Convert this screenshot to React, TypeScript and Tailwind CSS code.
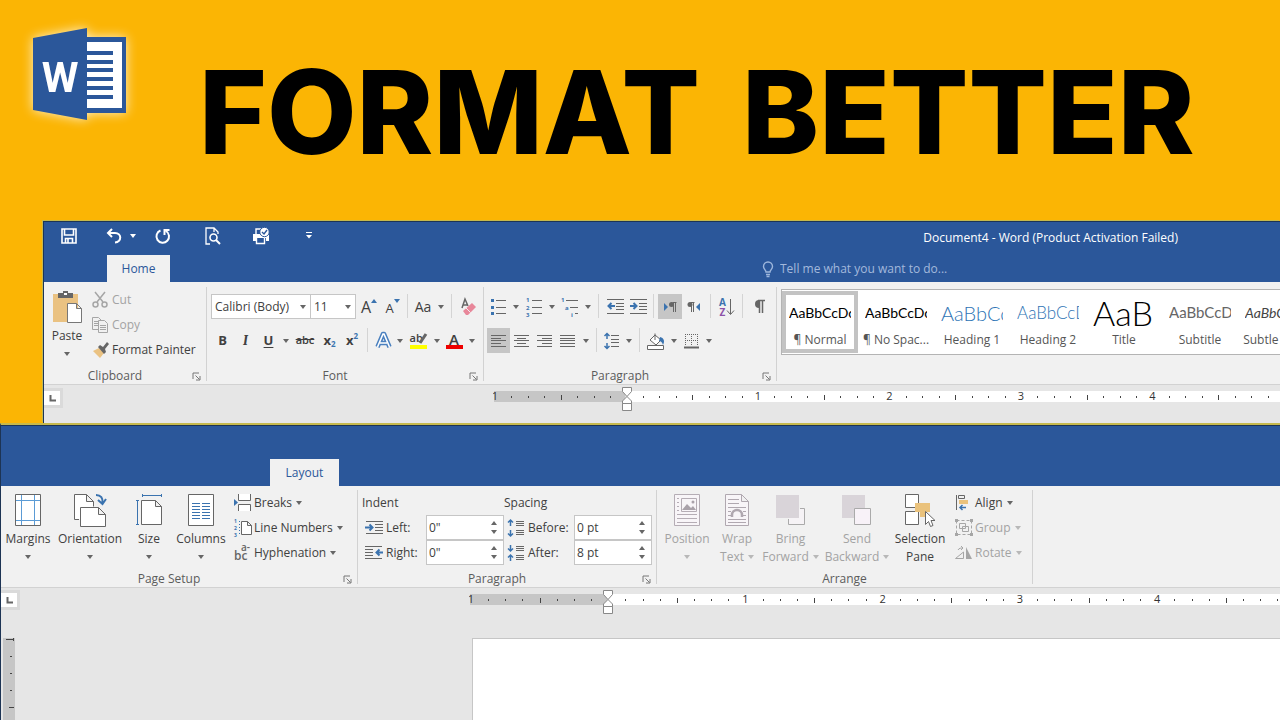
import type { ReactNode } from 'react'

const GREY = '#666666'
const BLUE = '#3b73af'

function Icon({ w = 18, h = 18, children }: { w?: number; h?: number; children: ReactNode }) {
  return (
    <svg width={w} height={h} viewBox={`0 0 ${w} ${h}`} fill="none" stroke={GREY} aria-hidden="true" className="shrink-0 overflow-visible">
      {children}
    </svg>
  )
}

function Caret({ color = GREY, up = false }: { color?: string; up?: boolean }) {
  return (
    <svg width="6" height="4" viewBox="0 0 6 4" aria-hidden="true" className="shrink-0">
      <path d={up ? 'M0 4h6L3 0z' : 'M0 0h6L3 4z'} fill={color} />
    </svg>
  )
}

function Tool({ label, className, children }: { label: string; className: string; children: ReactNode }) {
  return (
    <button aria-label={label} className={`flex h-[25px] shrink-0 items-center justify-center ${className}`}>
      {children}
    </button>
  )
}

function Sep() {
  return <div className="mx-1 h-6 w-px shrink-0 bg-[#d4d4d4]" />
}

function Group({ title, launcher = true, className = '', children }: { title: string; launcher?: boolean; className?: string; children: ReactNode }) {
  return (
    <section className={`flex shrink-0 flex-col border-r border-[#d2d2d2] ${className}`}>
      <div className="flex min-h-[84px] flex-1">{children}</div>
      <footer className="flex h-[10px] items-center text-[#5c5c5c]">
        <span className="flex-1 text-center">{title}</span>
        {launcher && (
          <button aria-label={`${title} settings`} className="flex w-5 justify-center">
            <Icon w={9} h={9}>
              <path d="M1 7V1h6M3.500 3.500l4 4M8 4v4H4" stroke="#777" />
            </Icon>
          </button>
        )}
      </footer>
    </section>
  )
}

function BigButton({ icon, label, second, muted = false, caret = true, className }: { icon: ReactNode; label: string; second?: string; muted?: boolean; caret?: boolean; className: string }) {
  return (
    <button className={`flex shrink-0 flex-col items-center whitespace-nowrap ${muted ? 'text-[#a3a3a3]' : ''} ${className}`}>
      <span className="flex h-10 items-center">{icon}</span>
      <span className="leading-[18px]">{label}</span>
      <span className="flex h-[17px] items-center gap-1">
        {second}
        {caret && <Caret color={muted ? '#b8b8b8' : GREY} />}
      </span>
    </button>
  )
}

function SmallButton({ icon, label, muted = false, caret = false }: { icon: ReactNode; label: string; muted?: boolean; caret?: boolean }) {
  return (
    <button className={`flex h-[25px] items-center whitespace-nowrap ${muted ? 'text-[#a3a3a3]' : ''}`}>
      <span className="flex w-5 justify-start">{icon}</span>
      <span>{label}</span>
      {caret && (
        <span className="ml-1">
          <Caret color={muted ? '#b8b8b8' : GREY} />
        </span>
      )}
    </button>
  )
}

function Spinner({ id, label, icon, value, labelClass }: { id: string; label: string; icon: ReactNode; value: string; labelClass: string }) {
  return (
    <div className="flex h-[25px] items-center">
      <span className="flex w-6 justify-center">{icon}</span>
      <label htmlFor={id} className={labelClass}>{label}</label>
      <div className="flex h-[25px] w-[78px] border border-[#c6c6c6] bg-white">
        <input id={id} defaultValue={value} className="w-full min-w-0 bg-transparent px-[2px] outline-none" />
        <div className="flex w-[18px] shrink-0 flex-col items-center justify-around py-[3px]">
          <button aria-label={`Increase ${label}`} className="flex"><Caret up /></button>
          <button aria-label={`Decrease ${label}`} className="flex"><Caret /></button>
        </div>
      </div>
    </div>
  )
}

function Ruler({ inch, className }: { inch: number; className: string }) {
  const ticks = Array.from({ length: 64 }, (_, i) => i)
  return (
    <svg height="26" width="100%" aria-hidden="true" className={`min-w-0 flex-1 ${className}`}>
      <rect x="1" y="6" width="100%" height="11" fill="#fff" />
      <rect x="1" y="6" width={inch} height="11" fill="#c6c6c6" />
      {ticks.map((i) => {
        const x = 2 + (i * inch) / 8
        if (i === 8) return null
        if (i % 8 === 0) {
          return (
            <text key={i} x={x} y="15" textAnchor="middle" fontSize="11" fill="#333">
              {Math.abs(i / 8 - 1)}
            </text>
          )
        }
        return i % 4 === 0 ? (
          <rect key={i} x={Math.round(x)} y="10" width="1" height="5" fill="#444" />
        ) : (
          <rect key={i} x={Math.round(x)} y="11" width="1" height="2" fill="#444" />
        )
      })}
      <g transform={`translate(${Math.round(inch) - 3} 2)`} fill="#fff" stroke="#888">
        <path d="M.5.5h9v4L5 9.500.5 4.500zM5 9.500l4.500 4.500v2.500h-9V14zM.5 16.500h9v7h-9z" />
      </g>
    </svg>
  )
}

function TabSelector() {
  return (
    <button aria-label="Tab selector" className="flex h-5 w-[19px] shrink-0 items-center justify-center border-r-[3px] border-b-[3px] border-t-[3px] border-[#dadada] bg-white">
      <Icon w={7} h={7}>
        <path d="M1.500 0v5.500H7" strokeWidth="2" />
      </Icon>
    </button>
  )
}

function Lines({ rows, color = GREY }: { rows: [number, number, number][]; color?: string }) {
  return (
    <>
      {rows.map(([x1, x2, y]) => (
        <path key={y} d={`M${x1} ${y + 0.5}H${x2}`} stroke={color} />
      ))}
    </>
  )
}

function WordLogo() {
  return (
    <svg width="112" height="112" viewBox="24 18 112 112" aria-label="Word" className="shrink-0 overflow-visible drop-shadow-[0_0_6px_rgba(255,255,255,0.8)]">
      <path d="M87 37h39v76H87z" fill="#2b579a" />
      <path d="M87 42h35v66H87z" fill="#fff" />
      {[51, 60, 68, 77, 86, 95].map((y) => (
        <rect key={y} x="87" y={y} width="26" height="4" fill="#2b579a" />
      ))}
      <path d="M33 38l54-10v92l-54-10z" fill="#2b579a" />
      <text x="60" y="92" textAnchor="middle" fontFamily="Roboto, sans-serif" fontSize="42" fontWeight="700" fill="#fff">W</text>
    </svg>
  )
}

function QuickAccess() {
  return (
    <div className="flex h-[33px] items-start pt-px text-white">
      <Tool label="Save" className="ml-[13px] w-6">
        <Icon w={16} h={16}>
          <path d="M1 1h14v14H1zM3.500 1v6h9V1M4.500 15v-4.500h7V15M7 11v4" stroke="#fff" strokeWidth="1.600" />
        </Icon>
      </Tool>
      <Tool label="Undo" className="ml-[21px] w-6">
        <Icon w={16} h={16}>
          <path d="M6 1L2 5l4 4M2 5h7c7 0 7 9 0 9.500" stroke="#fff" strokeWidth="2" />
        </Icon>
      </Tool>
      <Tool label="Undo history" className="w-[14px]"><Caret color="#fff" /></Tool>
      <Tool label="Repeat" className="ml-[11px] w-6">
        <Icon w={16} h={16}>
          <path d="M5.500 2.500A6.300 6.300 0 1 0 11 3M9.500 7V2h5" stroke="#fff" strokeWidth="2" />
        </Icon>
      </Tool>
      <Tool label="Print preview" className="ml-[26px] w-6">
        <Icon w={16} h={18}>
          <path d="M5 17H1V1h8l4 4v2M9 1v4" stroke="#fff" strokeWidth="1.300" />
          <circle cx="8.500" cy="10.500" r="3.500" stroke="#fff" strokeWidth="1.600" />
          <path d="M11 13l4 4" stroke="#fff" strokeWidth="2" />
        </Icon>
      </Tool>
      <Tool label="Quick print" className="ml-6 w-6">
        <Icon w={18} h={18}>
          <path d="M1 7h16v7h-3v-3H4v3H1z" fill="#fff" stroke="none" />
          <path d="M4 7V2h5M4.500 11v5.500h8V11" stroke="#fff" strokeWidth="1.400" />
          <circle cx="12.500" cy="5" r="4.700" fill="#fff" stroke="#2b579a" />
          <path d="M10 5l2 2 3-4" stroke="#2b579a" strokeWidth="1.400" />
        </Icon>
      </Tool>
      <Tool label="Customize toolbar" className="ml-6 w-6">
        <Icon w={6} h={7}>
          <path d="M0 .5h6" stroke="#fff" />
          <path d="M0 3h6L3 6.500z" fill="#fff" stroke="none" />
        </Icon>
      </Tool>
      <p className="mr-[102px] ml-auto pt-[6px] leading-[18px]">Document4 - Word (Product Activation Failed)</p>
    </div>
  )
}

function Clipboard() {
  return (
    <Group title="Clipboard" className="w-[163px]">
      <BigButton
        label="Paste"
        className="w-[46px]"
        icon={
          <Icon w={31} h={34}>
            <path d="M1 4h25v28H1z" fill="#eac282" stroke="none" />
            <path d="M6 3h5V1h5v2h5v5H6z" fill="#666" stroke="none" />
            <path d="M12 3h3v2h-3z" fill="#fff" stroke="none" />
            <path d="M15.500 13.500h9l5 5v14h-14zM24.500 13.500v5h5" fill="#fff" stroke="#777" />
          </Icon>
        }
      />
      <div className="flex flex-col pl-[2px]">
        <SmallButton
          muted
          label="Cut"
          icon={
            <Icon w={16} h={16}>
              <g stroke="#a6a6a6" strokeWidth="1.500">
                <path d="M3 0l8 10M13 0L5 10" />
                <circle cx="3.500" cy="12.500" r="2.500" />
                <circle cx="12.500" cy="12.500" r="2.500" />
              </g>
            </Icon>
          }
        />
        <SmallButton
          muted
          label="Copy"
          icon={
            <Icon w={17} h={16}>
              <g stroke="#a6a6a6" fill="#f1f1f1">
                <path d="M.5.5h6l3 3v9h-9zM2 4.500h4M2 6.500h4M2 8.500h4" />
                <path d="M6.500 3.500h6l3 3v9h-9zM8 8.500h6M8 10.500h6M8 12.500h6" />
              </g>
            </Icon>
          }
        />
        <SmallButton
          label="Format Painter"
          icon={
            <Icon w={17} h={16}>
              <path d="M1 9l6-3 5 5-4 5z" fill="#eac282" stroke="none" />
              <path d="M6 5l2-2 3 2 4-5 2 2-4 5 1 3-2 2z" fill="#666" stroke="none" />
            </Icon>
          }
        />
      </div>
    </Group>
  )
}

function FontGroup() {
  return (
    <Group title="Font" className="w-[277px]">
      <div className="flex flex-col gap-[9px] pt-[7px] pl-1">
        <div className="flex">
          <label className="relative flex h-[25px] w-[100px] items-center border border-[#c6c6c6] bg-white">
            <select aria-label="Font" className="h-full w-full appearance-none pl-[3px] outline-none">
              <option>Calibri (Body)</option>
            </select>
            <span className="pointer-events-none absolute right-1"><Caret /></span>
          </label>
          <label className="relative -ml-px flex h-[25px] w-[46px] items-center border border-[#c6c6c6] bg-white">
            <select aria-label="Font size" className="h-full w-full appearance-none pl-[3px] outline-none">
              <option>11</option>
            </select>
            <span className="pointer-events-none absolute right-1"><Caret /></span>
          </label>
          <Tool label="Grow font" className="w-[26px]">
            <span className="text-base">A</span>
            <span className="-mt-3"><Caret color={BLUE} up /></span>
          </Tool>
          <Tool label="Shrink font" className="w-[21px]">
            <span className="pt-1 text-[13px]">A</span>
            <span className="-mt-3"><Caret color={BLUE} /></span>
          </Tool>
          <Sep />
          <Tool label="Change case" className="w-[22px] text-sm">Aa</Tool>
          <Tool label="Case options" className="w-[13px]"><Caret /></Tool>
          <Sep />
          <Tool label="Clear formatting" className="w-6">
            <Icon w={17} h={18}>
              <path d="M2 10L5 1l3 7M3.500 7h4" strokeWidth="1.500" />
              <path d="M3 13l9-8 4 4-8 8H6z" fill="#e8879a" stroke="none" />
              <path d="M6 10l4.500 4.500" stroke="#f1f1f1" />
            </Icon>
          </Tool>
        </div>
        <div className="flex">
          <Tool label="Bold" className="w-[23px] text-[13px] font-bold">B</Tool>
          <Tool label="Italic" className="w-[23px] font-serif text-sm font-bold italic">I</Tool>
          <Tool label="Underline" className="w-[23px] text-[13px] font-bold underline underline-offset-2">U</Tool>
          <Tool label="Underline options" className="w-3"><Caret /></Tool>
          <Tool label="Strikethrough" className="w-[26px] text-[11px] font-semibold line-through">abc</Tool>
          <Tool label="Subscript" className="w-[23px] text-[13px] font-bold">
            x<span className="pt-2 text-[8px] text-[#3b73af]">2</span>
          </Tool>
          <Tool label="Superscript" className="w-[22px] text-[13px] font-bold">
            x<span className="pb-2 text-[8px] text-[#3b73af]">2</span>
          </Tool>
          <Sep />
          <Tool label="Text effects" className="w-[22px]">
            <Icon w={17} h={18}>
              <path d="M2.500 15L8 2h1l5.500 13M5 11h7" stroke="#4a80bf" strokeWidth="4.500" strokeLinejoin="round" />
              <path d="M2.500 15L8 2h1l5.500 13M5 11h7" stroke="#fff" strokeWidth="1.600" />
            </Icon>
          </Tool>
          <Tool label="Effect options" className="w-[11px]"><Caret /></Tool>
          <Tool label="Highlight" className="w-[26px]">
            <span className="flex w-[17px] flex-col">
              <span className="flex h-[13px] items-center text-[11px] font-semibold">
                ab
                <Icon w={4} h={12}>
                  <path d="M3 1L-3 10" strokeWidth="3" />
                </Icon>
              </span>
              <span className="h-1 bg-[#ffff00]" />
            </span>
          </Tool>
          <Tool label="Highlight colors" className="w-[11px]"><Caret /></Tool>
          <Tool label="Font color" className="w-6">
            <span className="flex w-[17px] flex-col items-center">
              <span className="h-[13px] text-[15px] leading-[14px] font-semibold">A</span>
              <span className="h-1 w-full bg-[#ee0000]" />
            </span>
          </Tool>
          <Tool label="Font colors" className="w-[11px]"><Caret /></Tool>
        </div>
      </div>
    </Group>
  )
}

const arrowLeft = 'M9 8H3M5.500 5L2.500 8l3 3'
const arrowRight = 'M1 8h6M4.500 5l3 3-3 3'

function ParagraphGroup() {
  return (
    <Group title="Paragraph" className="w-[293px]">
      <div className="flex flex-col gap-[9px] pt-[7px] pl-[3px]">
        <div className="flex">
          <Tool label="Bullets" className="w-[23px]">
            <Icon w={15} h={18}>
              <Lines rows={[[5, 15, 2], [5, 15, 9], [5, 15, 15]]} />
              <path d="M0 1h3v3H0zM0 8h3v3H0zM0 14h3v3H0z" fill={BLUE} stroke="none" />
            </Icon>
          </Tool>
          <Tool label="Bullet library" className="w-3"><Caret /></Tool>
          <Tool label="Numbering" className="w-6">
            <Icon w={16} h={18}>
              <Lines rows={[[6, 16, 2], [6, 16, 9], [6, 16, 15]]} />
              <g fontSize="6" fontWeight="700" fill={BLUE} stroke="none">
                <text x="0" y="4">1</text>
                <text x="0" y="12">2</text>
                <text x="0" y="19">3</text>
              </g>
            </Icon>
          </Tool>
          <Tool label="Number library" className="w-3"><Caret /></Tool>
          <Tool label="Multilevel list" className="w-6">
            <Icon w={18} h={18}>
              <Lines rows={[[5, 17, 2], [9, 17, 9], [14, 17, 15]]} />
              <g fontSize="6" fontWeight="700" fill={BLUE} stroke="none">
                <text x="0" y="4">1</text>
                <text x="4" y="12">a</text>
                <text x="10" y="19">i</text>
              </g>
            </Icon>
          </Tool>
          <Tool label="List library" className="w-3"><Caret /></Tool>
          <Sep />
          <Tool label="Decrease indent" className="w-[23px]">
            <Icon w={18} h={17}>
              <Lines rows={[[1, 18, 1], [10, 18, 5], [10, 18, 8], [10, 18, 11], [1, 18, 15]]} />
              <path d={arrowLeft} stroke={BLUE} strokeWidth="2" />
            </Icon>
          </Tool>
          <Tool label="Increase indent" className="w-[23px]">
            <Icon w={18} h={17}>
              <Lines rows={[[1, 18, 1], [10, 18, 5], [10, 18, 8], [10, 18, 11], [1, 18, 15]]} />
              <path d={arrowRight} stroke={BLUE} strokeWidth="2" />
            </Icon>
          </Tool>
          <Sep />
          <Tool label="Left to right" className="w-6 bg-[#c6c6c6]">
            <Icon w={14} h={12}>
              <path d="M1 2l4 4-4 4z" fill={BLUE} stroke="none" />
              <path d="M13.500 1.500H9.500M10.500 1v10M12.500 1v10" />
              <circle cx="8.500" cy="3.500" r="2.500" fill={GREY} stroke="none" />
            </Icon>
          </Tool>
          <Tool label="Right to left" className="w-6">
            <Icon w={14} h={12}>
              <path d="M13 2L9 6l4 4z" fill={BLUE} stroke="none" />
              <path d="M7.500 1.500h-4M4.500 1v10M6.500 1v10" />
              <circle cx="3" cy="3.500" r="2.500" fill={GREY} stroke="none" />
            </Icon>
          </Tool>
          <Sep />
          <Tool label="Sort" className="w-[23px]">
            <span className="flex flex-col text-[10px] leading-[10px] font-bold">
              <span className="text-[#3b73af]">A</span>
              <span className="text-[#8d52a8]">Z</span>
            </span>
            <Icon w={8} h={18}>
              <path d="M4.500 1v15M1 12.500l3.500 4 3.500-4" />
            </Icon>
          </Tool>
          <Sep />
          <Tool label="Show marks" className="w-6">
            <Icon w={12} h={15}>
              <path d="M12 1.500H5M6.500 1v13M9.500 1v13" strokeWidth="1.500" />
              <path d="M6 1a4 4 0 0 0 0 8z" fill={GREY} stroke="none" />
            </Icon>
          </Tool>
        </div>
        <div className="flex">
          <Tool label="Align left" className="w-[23px] bg-[#c6c6c6]">
            <Icon w={16} h={12}><Lines rows={[[0, 15, 0], [0, 10, 3], [0, 15, 5], [0, 10, 8], [0, 15, 11]]} /></Icon>
          </Tool>
          <Tool label="Center" className="w-[23px]">
            <Icon w={16} h={12}><Lines rows={[[0, 15, 0], [3, 12, 3], [0, 15, 5], [3, 12, 8], [0, 15, 11]]} /></Icon>
          </Tool>
          <Tool label="Align right" className="w-6">
            <Icon w={16} h={12}><Lines rows={[[0, 15, 0], [5, 15, 3], [0, 15, 5], [5, 15, 8], [0, 15, 11]]} /></Icon>
          </Tool>
          <Tool label="Justify" className="w-[22px]">
            <Icon w={16} h={12}><Lines rows={[[0, 15, 0], [0, 15, 3], [0, 15, 5], [0, 15, 8], [0, 15, 11]]} /></Icon>
          </Tool>
          <Tool label="Justify options" className="w-[13px]"><Caret /></Tool>
          <Sep />
          <Tool label="Line spacing" className="w-[21px]">
            <Icon w={16} h={18}>
              <Lines rows={[[7, 15, 3], [7, 15, 7], [7, 15, 10], [7, 15, 14]]} />
              <path d="M3 1.500V7M.5 4L3 1.500 5.500 4M3 11v5.500M.5 14L3 16.500 5.500 14" stroke={BLUE} strokeWidth="1.500" />
            </Icon>
          </Tool>
          <Tool label="Spacing options" className="w-[13px]"><Caret /></Tool>
          <Sep />
          <Tool label="Shading" className="w-6">
            <Icon w={18} h={18}>
              <path d="M3 8l5-5 6 5-5 5zM8 8V1.500" fill="#fff" />
              <path d="M13 5c4 1 5 4 3 8-1-3-2-4-4-4z" fill={BLUE} stroke="none" />
              <path d="M.5 13.500h16v4H.5z" fill="#fff" />
            </Icon>
          </Tool>
          <Tool label="Shading colors" className="w-3"><Caret /></Tool>
          <Tool label="Borders" className="w-[22px]">
            <Icon w={15} h={16}>
              <path d="M1.500 1v12M7.500 1v12M13.500 1v12M1 1.500h13M1 7.500h13" strokeDasharray="1 1" />
              <path d="M0 14.500h15" strokeWidth="2" />
            </Icon>
          </Tool>
          <Tool label="Border options" className="w-[14px]"><Caret /></Tool>
        </div>
      </div>
    </Group>
  )
}

const styles = [
  { name: '¶ Normal', sample: 'AaBbCcDc', look: 'text-sm text-black' },
  { name: '¶ No Spac...', sample: 'AaBbCcDc', look: 'text-sm text-black' },
  { name: 'Heading 1', sample: 'AaBbCc', look: 'text-xl text-[#2e74b5] font-light' },
  { name: 'Heading 2', sample: 'AaBbCcD', look: 'text-[17px] text-[#2e74b5] font-light' },
  { name: 'Title', sample: 'AaB', look: 'text-[34px] text-black font-light' },
  { name: 'Subtitle', sample: 'AaBbCcD', look: 'text-[15px] text-[#666]' },
  { name: 'Subtle Em...', sample: 'AaBbCcDc', look: 'text-sm text-[#444] italic' },
]

function StyleGallery() {
  return (
    <div className="min-w-0 flex-1 overflow-hidden pt-[2px] pl-1">
      <div className="flex h-[66px] border border-r-0 border-[#b4b4b4] bg-white py-px">
        {styles.map((s, i) => (
          <button
            key={s.name}
            className={`flex w-[76px] shrink-0 flex-col items-center border-4 pt-[3px] ${i === 0 ? 'border-[#c3c3c3]' : 'border-transparent'}`}
          >
            <span className={`flex h-8 w-[62px] items-center overflow-hidden whitespace-nowrap font-[Lato] ${s.look}`}>{s.sample}</span>
            <span className="pt-[3px] leading-[18px] whitespace-nowrap text-[#555]">{s.name}</span>
          </button>
        ))}
      </div>
    </div>
  )
}

function HomeWindow() {
  return (
    <div className="ml-[43px] border-t border-l border-[#1d3454] bg-[#e6e6e6] shadow-[-1px_-1px_0_#c6b94c]">
      <div className="bg-[#2b579a]">
        <QuickAccess />
        <div className="flex h-[27px] items-end">
          <button className="ml-[63px] h-[27px] w-[63px] bg-[#f1f1f1] text-[#2b579a]">Home</button>
          <label className="ml-[592px] flex h-[27px] items-center gap-[6px]">
            <Icon w={12} h={16}>
              <path d="M4 11c0-2-2.500-3-2.500-5.500a4.500 4.500 0 0 1 9 0C10.500 8 8 9 8 11zM4 13.500h4M4.500 15.500h3" stroke="#9db6dc" strokeWidth="1.400" />
            </Icon>
            <input aria-label="Tell me" placeholder="Tell me what you want to do..." className="w-[200px] bg-transparent outline-none placeholder:text-[#a3b9dc]" />
          </label>
        </div>
      </div>
      <div className="flex border-b border-[#d2d2d2] bg-[#f1f1f1] pt-[5px] pb-[3px]">
        <Clipboard />
        <FontGroup />
        <ParagraphGroup />
        <StyleGallery />
      </div>
      <div className="flex h-[38px] items-start">
        <div className="pt-[3px]"><TabSelector /></div>
        <Ruler inch={131.5} className="ml-[430px]" />
      </div>
    </div>
  )
}

function PageSetup() {
  return (
    <Group title="Page Setup" className="w-[357px]">
      <BigButton
        label="Margins"
        className="w-[54px]"
        icon={
          <Icon w={26} h={32}>
            <path d="M.5.5h25v31H.5z" fill="#fff" />
            <path d="M6.500 1v30M19.500 1v30M1 6.500h24M1 26.500h24" stroke="#5b9bd5" />
          </Icon>
        }
      />
      <BigButton
        label="Orientation"
        className="w-[70px]"
        icon={
          <Icon w={33} h={34}>
            <path d="M5 26.500H.5v-25h12l7 7v5M12.500 1.500v7h7" fill="#fff" />
            <path d="M6.500 14.500h18l7 7v12h-25zM24.500 14.500v7h7" fill="#fff" />
            <path d="M22 2c5 0 7 3 6.500 8M24 7l4.500 4L32 6" stroke={BLUE} strokeWidth="2" />
          </Icon>
        }
      />
      <BigButton
        label="Size"
        className="w-12"
        icon={
          <Icon w={27} h={32}>
            <path d="M5.500 6.500h14l6 6v18h-20zM19.500 6.500v6h6" fill="#fff" />
            <path d="M6 1.500h20M6.500 0v3M25.500 0v3M1.500 6v25M0 6.500h3M0 30.500h3" stroke={BLUE} />
          </Icon>
        }
      />
      <BigButton
        label="Columns"
        className="w-14"
        icon={
          <Icon w={26} h={32}>
            <path d="M.5.5h25v31H.5z" fill="#fff" />
            <Lines color={BLUE} rows={[[4, 12, 9], [4, 12, 12], [4, 12, 15], [4, 12, 18], [4, 12, 21], [4, 12, 24]]} />
            <Lines color={BLUE} rows={[[14, 22, 9], [14, 22, 12], [14, 22, 15], [14, 22, 18], [14, 22, 21], [14, 22, 24]]} />
          </Icon>
        }
      />
      <div className="flex flex-col pl-[5px]">
        <SmallButton
          caret
          label="Breaks"
          icon={
            <Icon w={18} h={17}>
              <path d="M4.500 0v6.500h12V0M4.500 17v-6.500h12V17" fill="#fff" />
              <path d="M0 5l4 3.500L0 12z" fill={BLUE} stroke="none" />
            </Icon>
          }
        />
        <SmallButton
          caret
          label="Line Numbers"
          icon={
            <Icon w={18} h={16}>
              <path d="M7.500 1.500h6l4 4v9h-10zM13.500 1.500v4h4" fill="#fff" />
              <g fontSize="5" fontWeight="700" fill={BLUE} stroke="none">
                <text x="0" y="3">1</text>
                <text x="0" y="10">2</text>
                <text x="0" y="17">3</text>
              </g>
              <path d="M5.500 1v14" stroke={BLUE} strokeDasharray="1 2" />
            </Icon>
          }
        />
        <SmallButton
          caret
          label="Hyphenation"
          icon={
            <Icon w={18} h={18}>
              <g fontSize="12" fontWeight="600" fill={GREY} stroke="none">
                <text x="0" y="16">bc</text>
                <text x="7" y="7" fontSize="10">a-</text>
              </g>
            </Icon>
          }
        />
      </div>
    </Group>
  )
}

function SpacingIcon({ after = false }: { after?: boolean }) {
  return (
    <Icon w={18} h={18}>
      <Lines rows={[[9, 17, 2], [9, 17, 4], [9, 17, 6], [9, 17, 11], [9, 17, 13], [9, 17, 15]]} />
      <path
        d={after ? 'M3.500 1v6M1 4.500L3.500 7 6 4.500M3.500 17v-6M1 13.500L3.500 11 6 13.500' : 'M3.500 7V1M1 3.500L3.500 1 6 3.500M3.500 11v6M1 14.500L3.500 17 6 14.500'}
        stroke={BLUE}
        strokeWidth="1.500"
      />
    </Icon>
  )
}

function IndentGroup() {
  return (
    <Group title="Paragraph" className="w-[299px]">
      <div className="flex flex-col pl-1">
        <p className="h-[25px] leading-[25px]">Indent</p>
        <Spinner
          id="left"
          label="Left:"
          value={'0"'}
          labelClass="w-10"
          icon={
            <Icon w={18} h={15}>
              <Lines rows={[[1, 18, 1], [10, 18, 4], [10, 18, 7], [10, 18, 10], [1, 18, 13]]} />
              <path d="M0 7.500h7M4.500 4.500l3 3-3 3" stroke={BLUE} strokeWidth="2" />
            </Icon>
          }
        />
        <Spinner
          id="right"
          label="Right:"
          value={'0"'}
          labelClass="w-10"
          icon={
            <Icon w={18} h={15}>
              <Lines rows={[[0, 17, 1], [0, 8, 4], [0, 8, 7], [0, 8, 10], [0, 17, 13]]} />
              <path d="M18 7.500h-6M14.500 4.500l-3 3 3 3" stroke={BLUE} strokeWidth="2" />
            </Icon>
          }
        />
      </div>
      <div className="flex flex-col">
        <p className="h-[25px] leading-[25px]">Spacing</p>
        <Spinner id="before" label="Before:" value="0 pt" labelClass="w-[46px]" icon={<SpacingIcon />} />
        <Spinner id="after" label="After:" value="8 pt" labelClass="w-[46px]" icon={<SpacingIcon after />} />
      </div>
    </Group>
  )
}

function Arrange() {
  return (
    <Group title="Arrange" launcher={false} className="w-[376px]">
      <BigButton
        muted
        label="Position"
        className="w-[60px]"
        icon={
          <Icon w={26} h={32}>
            <g stroke="#b5adb5">
              <path d="M.5.5h25v31H.5z" fill="#f8f5f8" />
              <path d="M7.500 4.500h15v13h-15z" />
              <path d="M8 16l5-6 4 4 2-2 3 4z" fill="#aaa2aa" stroke="none" />
              <circle cx="19" cy="8" r="1.500" fill="#aaa2aa" stroke="none" />
              <path d="M3 4.500h2M3 8.500h2M3 12.500h2M3 16.500h2M3 20.500h20M3 24.500h20M3 28.500h20" />
            </g>
          </Icon>
        }
      />
      <BigButton
        muted
        label="Wrap"
        second="Text"
        className="w-10"
        icon={
          <Icon w={24} h={32}>
            <g stroke="#b0a8b0">
              <path d="M.5.5h16l7 7v24H.5zM16.500.5v7h7" fill="#f8f5f8" />
              <path d="M3 5.500h11M3 9.500h11M3 13.500h18M3 17.500h3M18 17.500h3M3 21.500h3M18 21.500h3M3 25.500h18M3 28.500h18" />
              <path d="M7 23v-2a5 5 0 0 1 10 0v2" strokeWidth="2.500" fill="#f8f5f8" />
            </g>
          </Icon>
        }
      />
      <BigButton
        muted
        label="Bring"
        second="Forward"
        className="w-[67px]"
        icon={
          <Icon w={30} h={32}>
            <path d="M24 14.500h4.500v16h-16V25" stroke="#aaa" fill="#f6f3f6" />
            <path d="M0 1h23v23H0z" fill="#d9d4d9" stroke="none" />
          </Icon>
        }
      />
      <BigButton
        muted
        label="Send"
        second="Backward"
        className="w-[66px]"
        icon={
          <Icon w={30} h={32}>
            <path d="M0 1h23v23H0z" fill="#d9d4d9" stroke="none" />
            <path d="M12.500 14.500h16v16h-16z" stroke="#aaa" fill="#f8f2f8" />
          </Icon>
        }
      />
      <BigButton
        label="Selection"
        second="Pane"
        caret={false}
        className="w-[60px]"
        icon={
          <Icon w={30} h={34}>
            <path d="M.5 1.500h13v13H.5zM.5 18.500h13v13H.5z" fill="#fff" />
            <path d="M10 10h15v9h-5v5h-5v-5h-5z" fill="#eac27c" stroke="none" />
            <path d="M20.500 18.500v13l3-3 2 5 2.500-1-2-5h4z" fill="#fff" />
          </Icon>
        }
      />
      <div className="flex flex-col pl-[5px]">
        <SmallButton
          caret
          label="Align"
          icon={
            <Icon w={15} h={17}>
              <path d="M1.500 1v15" />
              <path d="M3.500 1.500h6v3h-6z" />
              <path d="M4 6h9v4H4z" fill="#eac27c" stroke="none" />
              <path d="M11 13.500H5M7.500 11L5 13.500 7.500 16" stroke={BLUE} strokeWidth="1.500" />
            </Icon>
          }
        />
        <SmallButton
          muted
          caret
          label="Group"
          icon={
            <Icon w={18} h={17}>
              <g stroke="#a6a6a6">
                <path d="M1.500 1.500h15v14h-15z" strokeDasharray="3 2" />
                <path d="M4.500 4.500h6v5h-6zM7.500 7.500h6v5h-6z" />
                <path d="M0 0h3v3H0zM15 0h3v3h-3zM0 14h3v3H0zM15 14h3v3h-3z" fill="#a6a6a6" stroke="none" />
              </g>
            </Icon>
          }
        />
        <SmallButton
          muted
          caret
          label="Rotate"
          icon={
            <Icon w={18} h={14}>
              <path d="M.5 12.500h8V6zM3 4c1-2 3-2 5-2M6 0l2 2-2 2" stroke="#a6a6a6" />
              <path d="M11 1v12h6z" fill="#a6a6a6" stroke="none" />
            </Icon>
          }
        />
      </div>
    </Group>
  )
}

function LayoutWindow() {
  return (
    <div className="flex flex-1 flex-col border-t-2 border-l border-[#1d3454] border-t-[#c6b94c] bg-[#e6e6e6]">
      <div className="flex items-end border-t border-[#1d3454] bg-[#2b579a] pt-[33px]">
        <button className="ml-[269px] h-[27px] w-[69px] bg-[#f1f1f1] text-[#2b579a]">Layout</button>
      </div>
      <div className="flex border-b border-[#d2d2d2] bg-[#f1f1f1] pt-1 pb-[3px]">
        <PageSetup />
        <IndentGroup />
        <Arrange />
      </div>
      <div className="flex items-start pb-6">
        <div className="pt-[2px]"><TabSelector /></div>
        <Ruler inch={137.25} className="ml-[449px]" />
      </div>
      <div className="flex flex-1">
        <svg width="12" height="83" aria-hidden="true" className="ml-[2px] bg-[#c6c6c6]">
          <path d="M3 1.500h8M10.500 0v3" stroke="#444" />
          <path d="M7 18.500h2M7 35.500h2M7 52.500h2M6 69.500h5" stroke="#444" />
        </svg>
        <div className="ml-[457px] flex-1 border-t border-l border-[#c6c6c6] bg-white" />
      </div>
    </div>
  )
}

export default function App() {
  return (
    <main className="flex min-h-screen flex-col overflow-hidden bg-[#fbb504] font-['Open_Sans',sans-serif] text-xs text-[#404040]">
      <header className="flex items-start pt-[18px] pb-[52px] pl-6">
        <WordLogo />
        <h1 className="mt-[38px] ml-[63px] flex gap-[42px] font-[Inter] text-[116px] leading-[113px] font-extrabold whitespace-nowrap text-black">
          <span>FORMAT</span>
          <span>BETTER</span>
        </h1>
      </header>
      <HomeWindow />
      <LayoutWindow />
    </main>
  )
}
